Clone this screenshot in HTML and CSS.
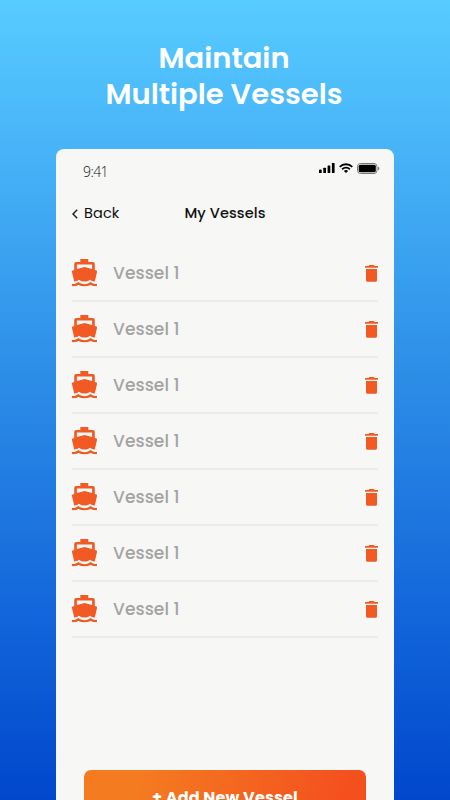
FILE: index.html
```html
<!DOCTYPE html>
<html lang="en">
<head>
<meta charset="utf-8">
<title>My Vessels</title>
<link rel="stylesheet" href="styles.css">
</head>
<body>
<svg class="defs" width="0" height="0">
  <symbol id="boat" viewBox="0 0 25 27.500"><path fill-rule="evenodd" d="M8.300 0h8v3h4.500a2 2 0 0 1 2 2v6l1.500.5q1 .4.700 1.400l-2.200 9.600c-1.900-.1-3.600-.8-4.700-1.800-1.400 1.200-3.200 1.800-5.600 1.800s-4.200-.6-5.600-1.800c-1.100 1-2.800 1.700-4.700 1.800L0 12.900q-.3-1 .7-1.400l1.500-.5V5a2 2 0 0 1 2-2h4.100zM4.900 5.600v4.500l7.600-2.200 7.600 2.200V5.600z"/><path d="M0 26.200c2.600.1 4.600-.5 6.300-1.700 3.700 2.300 8.700 2.300 12.400 0 1.700 1.200 3.700 1.800 6.300 1.700" fill="none" stroke="#f15a22" stroke-width="2.300"/></symbol>
  <symbol id="trash" viewBox="0 0 13 17"><path d="M4.200 0h4.600l.8 1H13v1.800H0V1h3.400zM1 4h11v11.200a1.600 1.600 0 0 1-1.600 1.600H2.600A1.600 1.600 0 0 1 1 15.200z"/></symbol>
</svg>
<h1 class="headline"><span>Maintain</span><span>Multiple Vessels</span></h1>
<main class="phone">
  <div class="status">
    <span class="time">9:41</span>
    <span class="indicators">
      <svg width="16" height="10" viewBox="0 0 16 10"><rect x="0" y="6.500" width="2.700" height="3.500" rx=".6"/><rect x="4.300" y="4.700" width="2.700" height="5.300" rx=".6"/><rect x="8.600" y="2.400" width="2.700" height="7.600" rx=".6"/><rect x="12.900" y="0" width="2.700" height="10" rx=".6"/></svg>
      <svg width="14" height="10" viewBox="0 0 14 10"><g fill="none" stroke="#000" stroke-width="1.800"><path d="M.7 3.800a9 9 0 0 1 12.600 0"/><path d="M3.100 6.300a5.600 5.600 0 0 1 7.800 0"/></g><path d="M7 10 4.900 7.900a3.100 3.100 0 0 1 4.200 0z"/></svg>
      <svg width="23" height="11" viewBox="0 0 23 11"><rect x=".5" y=".5" width="19.500" height="10" rx="3" fill="none" stroke="#777"/><rect x="1.700" y="1.700" width="17.100" height="7.600" rx="1.600"/><path d="M21 3.700c1.800.5 1.800 3.100 0 3.600z" fill="#777"/></svg>
    </span>
  </div>
  <header class="nav">
    <span class="back"><svg width="6" height="10" viewBox="0 0 6 10"><path d="M5.200.8 1 5l4.200 4.200" fill="none" stroke="#222" stroke-width="1.500"/></svg><span>Back</span></span>
    <h2 class="title">My Vessels</h2>
  </header>
  <ul class="list">
    <li class="row"><svg class="boat"><use href="#boat"/></svg><span class="name">Vessel 1</span><svg class="trash"><use href="#trash"/></svg></li>
    <li class="row"><svg class="boat"><use href="#boat"/></svg><span class="name">Vessel 1</span><svg class="trash"><use href="#trash"/></svg></li>
    <li class="row"><svg class="boat"><use href="#boat"/></svg><span class="name">Vessel 1</span><svg class="trash"><use href="#trash"/></svg></li>
    <li class="row"><svg class="boat"><use href="#boat"/></svg><span class="name">Vessel 1</span><svg class="trash"><use href="#trash"/></svg></li>
    <li class="row"><svg class="boat"><use href="#boat"/></svg><span class="name">Vessel 1</span><svg class="trash"><use href="#trash"/></svg></li>
    <li class="row"><svg class="boat"><use href="#boat"/></svg><span class="name">Vessel 1</span><svg class="trash"><use href="#trash"/></svg></li>
    <li class="row"><svg class="boat"><use href="#boat"/></svg><span class="name">Vessel 1</span><svg class="trash"><use href="#trash"/></svg></li>
  </ul>
  <button class="add">+ Add New Vessel</button>
</main>
</body>
</html>
```
FILE: styles.css
```css
* { box-sizing: border-box; }
html { overflow: hidden; }
body {
  margin: 0;
  height: 800px;
  overflow: hidden;
  background: linear-gradient(180deg, #57ccff 0%, #48b4f8 18%, #2e90e8 45%, #1468db 75%, #0047cc 100%);
  font-family: Poppins, Inter, sans-serif;
  color: #111;
}
.defs { display: block; height: 0; }
.headline {
  margin: 0;
  padding: 40px 2px 0 0;
  height: 149px;
  display: flex;
  flex-direction: column;
  align-items: center;
  font-size: 29px;
  line-height: 36px;
  font-weight: 600;
  color: #fff;
}
.phone {
  width: 338px;
  height: 651px;
  overflow: hidden;
  margin: 0 auto;
  border-radius: 8px 8px 0 0;
  background: #f7f7f5;
}
.status {
  display: flex;
  justify-content: space-between;
  padding: 14px 14px 0 27px;
  height: 44px;
}
.time {
  font: 300 14px/17px "Open Sans", sans-serif;
  letter-spacing: -.6px;
}
.indicators { display: flex; align-items: flex-start; gap: 4px; }
.nav {
  display: grid;
  grid-template-columns: 1fr auto 1fr;
  align-items: center;
  height: 41px;
  padding: 0 16px;
}
.back {
  display: flex;
  align-items: center;
  gap: 6px;
  font-size: 14.5px;
  letter-spacing: .1px;
}
.title {
  margin: 0;
  font-size: 14.5px;
  font-weight: 500;
  letter-spacing: .1px;
}
.list {
  list-style: none;
  margin: 12px 16px 0 16px;
  padding: 0;
}
.row {
  display: flex;
  align-items: center;
  height: 56px;
  border-bottom: 2px solid #ebebea;
}
.boat { width: 25px; height: 27.5px; fill: #f15a22; }
.name {
  flex: 1;
  margin-left: 16px;
  font-size: 17px;
  font-weight: 500;
  letter-spacing: .1px;
  color: #a3a3a2;
}
.trash { width: 13px; height: 17px; fill: #f15a22; }
.add {
  display: block;
  width: 282px;
  height: 54px;
  margin: 132px auto 0;
  padding: 2px 0 0;
  border: 0;
  border-radius: 7px;
  background: linear-gradient(105deg, #f47b20 20%, #f4501e 90%);
  color: #fff;
  font: 700 16px/24px Poppins, Inter, sans-serif;
  letter-spacing: .15px;
}
```
